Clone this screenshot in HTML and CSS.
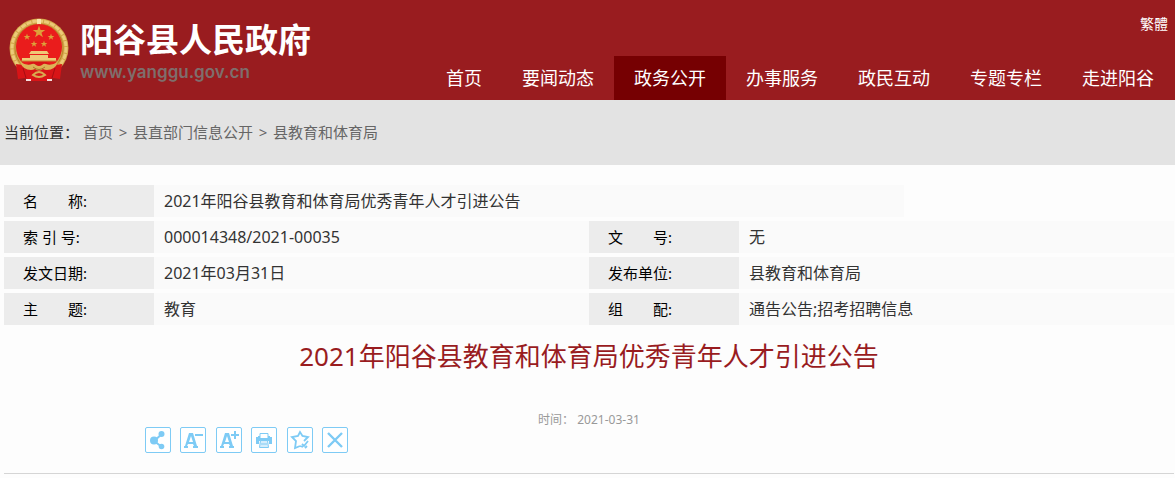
FILE: index.html
```html
<!DOCTYPE html>
<html lang="zh-CN">
<head>
  <meta charset="UTF-8">
  <meta name="viewport" content="width=device-width, initial-scale=1.0">
  <title>2021年阳谷县教育和体育局优秀青年人才引进公告</title>
  <link rel="stylesheet" href="styles.css">
</head>
<body>
  <header class="header">
    <a href="#" class="logo">
      <svg class="emblem" viewBox="0 0 60 64" aria-hidden="true">
        <defs>
          <path id="star" d="M0-5 1.2-1.6 4.8-1.6 1.9.6 3 4 0 1.9-3 4-1.9.6-4.8-1.6-1.2-1.6z"/>
        </defs>
        <circle cx="30" cy="30" r="29.5" fill="#d3a548"/>
        <circle cx="30" cy="30" r="27" fill="none" stroke="#ecca78" stroke-width="3" stroke-dasharray="5 1"/>
        <circle cx="30" cy="30" r="24" fill="none" stroke="#b9822c"/>
        <path d="M28 1h4v6h-4z" fill="#f8e7ad"/>
        <circle cx="30" cy="29" r="23" fill="#ea1c1c"/>
        <g fill="#dda03a">
          <use href="#star" transform="translate(30 14) scale(1.3)"/>
          <use href="#star" transform="translate(18 19) scale(.7)"/>
          <use href="#star" transform="translate(42 19) scale(.7)"/>
          <use href="#star" transform="translate(25 26) scale(.7)"/>
          <use href="#star" transform="translate(35 26) scale(.7)"/>
        </g>
        <path d="M22 33h16l2 3H20zM21 37h18v3H21zM13 40h34v3H13z" fill="#efc977"/>
        <path d="M12 43h36" stroke="#c28a34"/>
        <path d="M7 46q10 2 16-2h14q6 4 16 2l-2 15-7-1-6 3H22l-6-3-7 1z" fill="#d81417"/>
        <path d="M11 44q7 4 12 2 2-1 4 1 3 2 6 0 2-2 4-1 5 2 12-2-3 8-11 8-2 0-4-1-4 3-8 0-2 1-4 1-8 0-11-8z" fill="#ddb257"/>
        <path d="M24 49q6 5 12 0" fill="none" stroke="#a87528"/>
        <path d="M24 57q6-6 12 0-6 4-12 0z" fill="none" stroke="#d9aa50" stroke-width="2"/>
        <path d="M17 62h5M38 62h5" stroke="#f5dede" stroke-width="2"/>
        <path d="M14 50l3 10M46 50l-3 10" stroke="#a60e12"/>
      </svg>
      <span class="logo-text">
        <strong class="site-name">阳谷县人民政府</strong>
        <span class="site-url">www.yanggu.gov.cn</span>
      </span>
    </a>
    <div class="header-right">
      <a href="#" class="lang">繁體</a>
      <nav class="nav">
        <a href="#">首页</a>
        <a href="#">要闻动态</a>
        <a href="#" class="on">政务公开</a>
        <a href="#">办事服务</a>
        <a href="#">政民互动</a>
        <a href="#">专题专栏</a>
        <a href="#">走进阳谷</a>
      </nav>
    </div>
  </header>

  <div class="position">
    <span class="position-label">当前位置：</span>
    <a href="#">首页</a>
    <span class="sep">&gt;</span>
    <a href="#">县直部门信息公开</a>
    <span class="sep">&gt;</span>
    <a href="#">县教育和体育局</a>
  </div>

  <main class="main">
    <dl class="info">
      <div class="item item-name">
        <dt>名　　称:</dt>
        <dd>2021年阳谷县教育和体育局优秀青年人才引进公告</dd>
      </div>
      <div class="item">
        <dt>索 引 号:</dt>
        <dd>000014348/2021-00035</dd>
      </div>
      <div class="item">
        <dt>文　　号:</dt>
        <dd>无</dd>
      </div>
      <div class="item">
        <dt>发文日期:</dt>
        <dd>2021年03月31日</dd>
      </div>
      <div class="item">
        <dt>发布单位:</dt>
        <dd>县教育和体育局</dd>
      </div>
      <div class="item">
        <dt>主　　题:</dt>
        <dd>教育</dd>
      </div>
      <div class="item">
        <dt>组　　配:</dt>
        <dd>通告公告;招考招聘信息</dd>
      </div>
    </dl>

    <h1 class="title">2021年阳谷县教育和体育局优秀青年人才引进公告</h1>
    <p class="time">时间： 2021-03-31</p>

    <div class="tools">
      <button type="button" aria-label="分享">
        <svg viewBox="0 0 24 24">
          <path d="M16 6 8 13l8 6" fill="none" stroke="currentColor" stroke-width="2"/>
          <circle cx="8" cy="12.5" r="4"/>
          <circle cx="15.5" cy="6" r="3"/>
          <circle cx="15.5" cy="18.5" r="2.8"/>
        </svg>
      </button>
      <button type="button" aria-label="缩小字体">
        <svg viewBox="0 0 24 24">
          <path fill-rule="evenodd" d="M8 5h4l4 13h1v2h-5v-2h1l-1-2H7l-1 2h1v2H3v-2h1zM10 8l-2 6h4z"/>
          <path d="M14 6h8v2h-8z"/>
        </svg>
      </button>
      <button type="button" aria-label="放大字体">
        <svg viewBox="0 0 24 24">
          <path fill-rule="evenodd" d="M8 5h4l4 13h1v2h-5v-2h1l-1-2H7l-1 2h1v2H3v-2h1zM10 8l-2 6h4z"/>
          <path d="M14 6h3V3h2v3h3v2h-3v3h-2V8h-3z"/>
        </svg>
      </button>
      <button type="button" aria-label="打印">
        <svg viewBox="0 0 24 24">
          <path d="M8 10V5.5h8V10" fill="none" stroke="currentColor"/>
          <path d="M4 9h2V8h2v2h8V8h2v1h2v7h-3v-3H7v3H4z"/>
          <path d="M8.500 12.500h7l1 7h-9z" fill="#d5edfb" stroke="currentColor"/>
          <path d="M9 16h6" stroke="currentColor"/>
        </svg>
      </button>
      <button type="button" aria-label="收藏">
        <svg viewBox="0 0 24 24" fill="none" stroke="currentColor" stroke-width="1.8">
          <path d="M12 18l-5 2 1-7-4-4 6-1 2-4 2.500 4 5.500 1-4 4"/>
          <path d="M14 16l2 2 4-5M12 18l3 1M19 18l-2 2"/>
        </svg>
      </button>
      <button type="button" aria-label="关闭">
        <svg viewBox="0 0 24 24" fill="none" stroke="currentColor" stroke-width="2.4">
          <path d="M5 5l14 14M19 5 5 19"/>
        </svg>
      </button>
    </div>
  </main>
</body>
</html>
```
FILE: styles.css
```css
* {
  margin: 0;
  padding: 0;
  box-sizing: border-box;
}

body {
  background-color: #fdfdfd;
  font-family: "Noto Sans", "Noto Sans CJK SC", sans-serif;
  font-size: 15px;
  color: #333;
}

a {
  text-decoration: none;
}

.header {
  display: flex;
  justify-content: space-between;
  height: 100px;
  background-color: #991c1f;
}

.logo {
  display: flex;
  align-items: center;
  gap: 11px;
  padding-left: 9px;
}

.emblem {
  width: 60px;
  height: 64px;
}

.logo-text {
  display: flex;
  flex-direction: column;
  padding-top: 2px;
}

.site-name {
  font-size: 33px;
  line-height: 42px;
  color: #fff;
}

.site-url {
  font-family: Inter, "Liberation Sans", sans-serif;
  font-size: 17px;
  font-weight: 600;
  line-height: 22px;
  color: #7f6e6c;
}

.header-right {
  display: flex;
  flex-direction: column;
  justify-content: space-between;
  align-items: flex-end;
}

.lang {
  padding: 14px 7px 0 0;
  font-size: 14px;
  line-height: 20px;
  color: #fff;
}

.nav {
  display: flex;
  padding-right: 1px;
}

.nav a {
  padding: 0 20px;
  font-size: 18px;
  line-height: 44px;
  color: #fff;
}

.nav .on {
  background-color: #760002;
}

.position {
  display: flex;
  height: 65px;
  padding-left: 4px;
  line-height: 64px;
  background-color: #e3e3e3;
}

.position-label {
  margin-right: 4px;
}

.position a {
  color: #666;
}

.sep {
  width: 20px;
  text-align: center;
  color: #666;
}

.main {
  margin: 20px 1px 0 4px;
  border-bottom: 1px solid #d5d5d5;
}

.info {
  display: grid;
  grid-template-columns: 1fr 1fr;
  row-gap: 4px;
}

.item {
  display: flex;
  line-height: 32px;
  background-color: #fafafa;
}

.item-name {
  grid-column: 1 / 3;
  max-width: 900px;
}

.item dt {
  width: 150px;
  padding-left: 19px;
  background-color: #ececec;
  color: #000;
}

.item dd {
  padding-left: 10px;
  font-size: 16px;
}

.title {
  margin-top: 10px;
  font-size: 26px;
  font-weight: 400;
  line-height: 42px;
  text-align: center;
  color: #991c1f;
}

.time {
  margin-top: 32px;
  font-size: 12px;
  line-height: 22px;
  text-align: center;
  color: #999;
}

.tools {
  display: flex;
  justify-content: space-between;
  width: 203px;
  margin: -4px 0 20px 141px;
}

.tools button {
  width: 26px;
  height: 26px;
  border: 1px solid #7ecbf5;
  border-radius: 2px;
  background-color: #fff;
  color: #7ecbf5;
  cursor: pointer;
}

.tools svg {
  display: block;
  width: 24px;
  height: 24px;
  fill: currentColor;
}

.tools svg[fill="none"] {
  fill: none;
}
```
